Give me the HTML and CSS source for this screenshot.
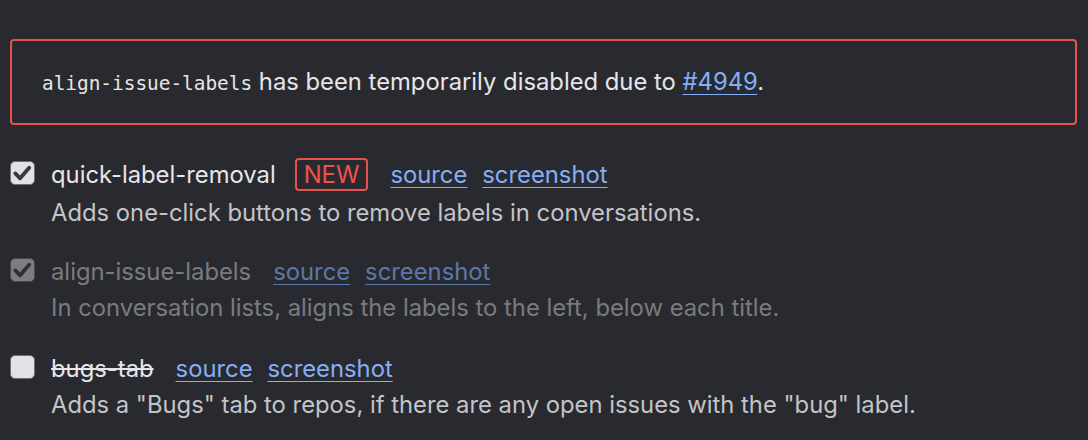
FILE: index.html
```html
<!DOCTYPE html>
<html lang="en">
  <head>
    <meta charset="UTF-8" />
    <title>Features</title>
    <link rel="stylesheet" href="styles.css">
  </head>
  <body>
    <div class="notice">
      <code>align-issue-labels</code> has been temporarily disabled due to <a href="#">#4949</a>.
    </div>

    <div class="feature new">
      <span class="box">
        <svg viewBox="0 0 24 24" width="24" height="24"><path d="M4.5 12.5 L9.5 17.5 L19 6.5" fill="none" stroke="#3b3b3d" stroke-width="4" stroke-linecap="round" stroke-linejoin="round"/></svg>
      </span>
      <div class="info">
        <div class="title">
          <span class="name">quick-label-removal</span>
          <span class="badge">NEW</span>
          <a href="#" class="first">source</a>
          <a href="#">screenshot</a>
        </div>
        <p>Adds one-click buttons to remove labels in conversations.</p>
      </div>
    </div>

    <div class="feature disabled">
      <span class="box">
        <svg viewBox="0 0 24 24" width="24" height="24"><path d="M4.5 12.5 L9.5 17.5 L19 6.5" fill="none" stroke="#3b3b3d" stroke-width="4" stroke-linecap="round" stroke-linejoin="round"/></svg>
      </span>
      <div class="info">
        <div class="title">
          <span class="name">align-issue-labels</span>
          <a href="#" class="first">source</a>
          <a href="#">screenshot</a>
        </div>
        <p>In conversation lists, aligns the labels to the left, below each title.</p>
      </div>
    </div>

    <div class="feature">
      <span class="box"></span>
      <div class="info">
        <div class="title">
          <span class="name struck">bugs-tab</span>
          <a href="#" class="first">source</a>
          <a href="#">screenshot</a>
        </div>
        <p>Adds a "Bugs" tab to repos, if there are any open issues with the "bug" label.</p>
      </div>
    </div>
  </body>
</html>
```

FILE: styles.css
```css
* {
  box-sizing: border-box;
}
body {
  background-color: #292a2f;
  color: #e6e6e9;
  font-family: Inter, "Noto Sans", sans-serif;
  font-size: 23.8px;
  margin: 0;
  padding: 39px 11px 0 10px;
}
a {
  color: #86aef5;
  text-decoration: underline;
  text-underline-offset: 4px;
  text-decoration-thickness: 1px;
}
.notice {
  border: 2px solid #e5534b;
  border-radius: 4px;
  padding: 0 30px;
  height: 86px;
  line-height: 82px;
  margin-bottom: 32px;
}
.notice code {
  font-family: "DejaVu Sans Mono", monospace;
  font-size: 19.4px;
}
.feature {
  display: flex;
  align-items: flex-start;
  margin-bottom: 28px;
}
.feature.new {
  margin-bottom: 26px;
}
.box {
  width: 25px;
  height: 24px;
  margin: 4px 16px 0 0;
  border-radius: 5px;
  border: 1px solid #6f6f72;
  background: #e2e2e4;
  flex-shrink: 0;
  display: flex;
  align-items: center;
  justify-content: center;
}
.title {
  display: flex;
  align-items: center;
  height: 34px;
}
.badge {
  color: #f0514a;
  border: 2px solid #e5534b;
  border-radius: 4px;
  height: 33px;
  padding: 0 7px;
  display: flex;
  align-items: center;
  margin-left: 19px;
}
.title a {
  margin-left: 15px;
}
.title a.first {
  margin-left: 22px;
}
.info p {
  margin: 5px 0 0;
  line-height: 30px;
  color: #c4c4c8;
}
.new .info p {
  margin-top: 7px;
}
.struck {
  text-decoration: line-through;
}
.disabled .name,
.disabled p {
  color: #7a7b7f;
}
.disabled a {
  color: #5a79a8;
}
.disabled .box {
  opacity: 0.45;
}
```
